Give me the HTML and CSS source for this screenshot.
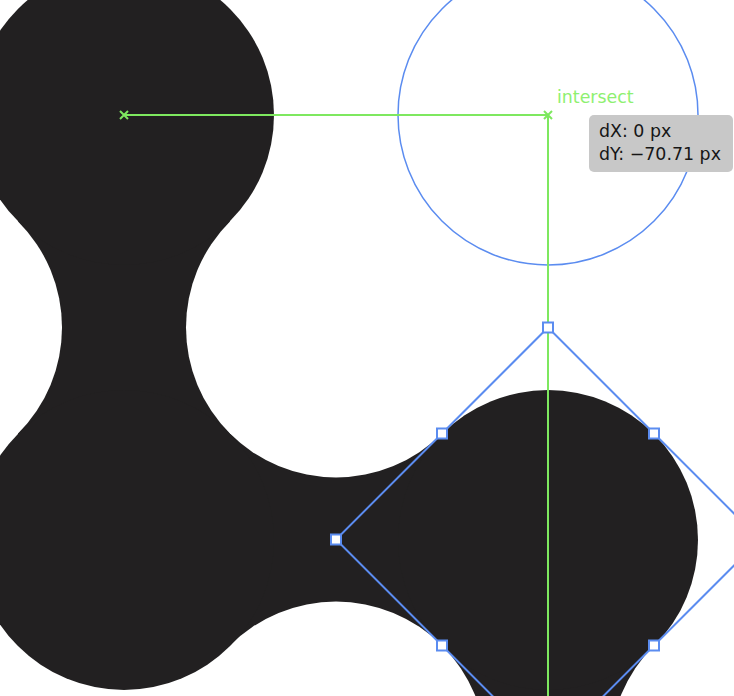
FILE: index.html
```html
<!DOCTYPE html>
<html lang="en">
<head>
<meta charset="utf-8">
<title>Intersect smart guide</title>
<link rel="stylesheet" href="styles.css">
</head>
<body>
<div class="canvas">
  <svg class="art" width="734" height="696" viewBox="0 0 734 696" xmlns="http://www.w3.org/2000/svg">
    <g class="blob">
      <polygon points="124,115 230,221.5 230,433.5 124,540 18,433.5 18,221.5"/>
      <polygon points="124,540 230,433.5 442,433.5 548,540 442,645.5 230,645.5"/>
      <polygon points="548,540 654,645.5 654,857.5 548,964 442,857.5 442,645.5"/>
    </g>
    <g class="holes">
      <circle cx="336" cy="327.5" r="150"/>
      <circle cx="-88" cy="327.5" r="150"/>
      <circle cx="336" cy="751.5" r="150"/>
      <circle cx="760" cy="751.5" r="150"/>
    </g>
    <g class="blob">
      <circle cx="124" cy="115" r="150"/>
      <circle cx="124" cy="540" r="150"/>
      <circle cx="548" cy="540" r="150"/>
      <circle cx="548" cy="964" r="150"/>
    </g>
    <circle class="ring" cx="548" cy="115" r="150"/>
    <polygon class="diamond" points="548,327.5 760,539.5 548,751.5 336,539.5"/>
    <g class="guide">
      <line x1="124" y1="115" x2="548" y2="115"/>
      <line x1="548" y1="115" x2="548" y2="700"/>
      <path d="M120 111 L128 119 M128 111 L120 119"/>
      <path d="M544 111 L552 119 M552 111 L544 119"/>
    </g>
    <g class="anchors">
      <rect x="543" y="322.5" width="10" height="10"/>
      <rect x="331" y="534.5" width="10" height="10"/>
      <rect x="437" y="428.5" width="10" height="10"/>
      <rect x="649" y="428.5" width="10" height="10"/>
      <rect x="437" y="640.5" width="10" height="10"/>
      <rect x="649" y="640.5" width="10" height="10"/>
    </g>
  </svg>
  <div class="label">intersect</div>
  <div class="tip">
    <div class="tip-line">dX: 0 px</div>
    <div class="tip-line">dY: −70.71 px</div>
  </div>
</div>
</body>
</html>
```

FILE: styles.css
```css
html, body {
  margin: 0;
  padding: 0;
  background: #ffffff;
}
.canvas {
  position: relative;
  width: 734px;
  height: 696px;
  overflow: hidden;
  background: #ffffff;
  font-family: "DejaVu Sans", "Liberation Sans", sans-serif;
}
.art {
  display: block;
}
.blob polygon,
.blob circle {
  fill: #222021;
}
.holes circle {
  fill: #ffffff;
}
.ring {
  fill: none;
  stroke: #5b8cf0;
  stroke-width: 1.5;
}
.diamond {
  fill: none;
  stroke: #5b8cf0;
  stroke-width: 2;
}
.guide line,
.guide path {
  stroke: #7ee85f;
  stroke-width: 2;
  fill: none;
}
.anchors rect {
  fill: #ffffff;
  stroke: #5b8cf0;
  stroke-width: 2;
}
.label {
  position: absolute;
  left: 557px;
  top: 87px;
  font-size: 17.4px;
  line-height: 20px;
  color: #8ef070;
}
.tip {
  position: absolute;
  left: 589px;
  top: 115px;
  width: 144px;
  height: 57px;
  box-sizing: border-box;
  padding: 5px 0 0 10px;
  background: #c8c8c8;
  border-radius: 5px;
  color: #161616;
  font-size: 17.4px;
  line-height: 23px;
  white-space: nowrap;
}
```
